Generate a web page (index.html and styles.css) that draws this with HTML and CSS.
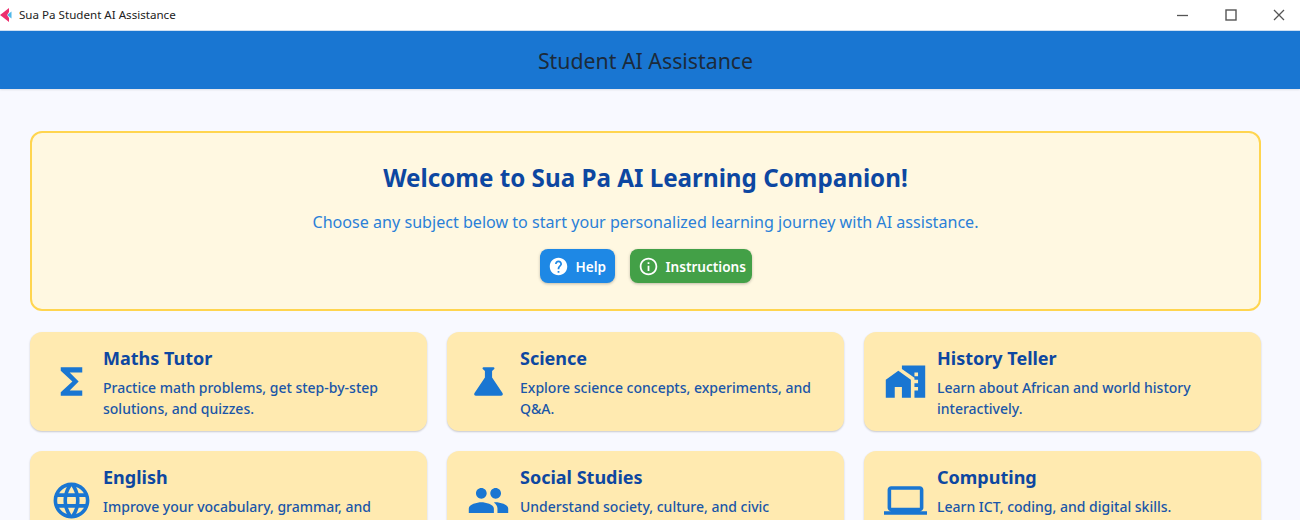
FILE: index.html
```html
<!DOCTYPE html>
<html>
<head>
	<title>Sua Pa Student AI Assistance</title>
	<link rel="stylesheet" href="styles.css">
</head>

<body>
	<div class="titlebar">
		<svg class="appicon" viewBox="0 0 12 14">
			<path d="M11.5 3.5 L7 7 L11.5 10.5 Z" fill="#4fb8ea"/>
			<path d="M9 0 L9 4 L7 7 L9 10 L9 14 L2 8.5 L0 7 L2 5.5 Z" fill="#ec2f6e"/>
		</svg>
		<span class="titlebar-text">Sua Pa Student AI Assistance</span>
		<div class="winbtns">
			<svg class="winbtn" viewBox="0 0 12 12"><path d="M0 6.5h11" stroke="#555" stroke-width="1.3"/></svg>
			<svg class="winbtn" viewBox="0 0 12 12"><rect x="1" y="1" width="10" height="10" fill="none" stroke="#555" stroke-width="1.4"/></svg>
			<svg class="winbtn" viewBox="0 0 12 12"><path d="M1 1l10 10M11 1L1 11" stroke="#555" stroke-width="1.3"/></svg>
		</div>
	</div>

	<div class="appbar">Student AI Assistance</div>

	<div class="content">
		<div class="welcome">
			<h1>Welcome to Sua Pa AI Learning Companion!</h1>
			<p>Choose any subject below to start your personalized learning journey with AI assistance.</p>
			<div class="btnrow">
				<div class="btn helpbtn">
					<svg viewBox="0 0 24 24"><path d="M12 2C6.48 2 2 6.48 2 12s4.48 10 10 10 10-4.48 10-10S17.52 2 12 2zm1 17h-2v-2h2v2zm2.07-7.75-.9.92C13.45 12.9 13 13.5 13 15h-2v-.5c0-1.1.45-2.1 1.17-2.83l1.24-1.26c.37-.36.59-.86.59-1.41 0-1.1-.9-2-2-2s-2 .9-2 2H8c0-2.21 1.79-4 4-4s4 1.79 4 4c0 .88-.36 1.68-.93 2.25z"/></svg>
					Help
				</div>
				<div class="btn infobtn">
					<svg viewBox="0 0 24 24"><path d="M11 7h2v2h-2zm0 4h2v6h-2zm1-9C6.48 2 2 6.48 2 12s4.48 10 10 10 10-4.48 10-10S17.52 2 12 2zm0 18c-4.41 0-8-3.59-8-8s3.59-8 8-8 8 3.59 8 8-3.59 8-8 8z"/></svg>
					Instructions
				</div>
			</div>
		</div>

		<div class="subjects">
			<div class="card">
				<svg class="cardicon" viewBox="0 0 24 24"><path d="M18 4H6v2l6.5 6L6 18v2h12v-3h-7l5-5-5-5h7z"/></svg>
				<div class="cardtext">
					<h2>Maths Tutor</h2>
					<p>Practice math problems, get step-by-step solutions, and quizzes.</p>
				</div>
			</div>
			<div class="card">
				<svg class="cardicon" viewBox="0 0 24 24"><path d="M19.8 18.4 14 9.8V6.2l1.2-1.2c.3-.4.1-1-.4-1H9.2c-.5 0-.7.6-.4 1L10 6.2v3.6L4.2 18.4c-.49.66-.02 1.6.8 1.6h14c.82 0 1.29-.94.8-1.6z"/></svg>
				<div class="cardtext">
					<h2>Science</h2>
					<p>Explore science concepts, experiments, and Q&amp;A.</p>
				</div>
			</div>
			<div class="card">
				<svg class="cardicon" viewBox="0 0 24 24"><path d="M1 11v10h5v-6h4v6h5V11L8 6z"/><path d="M10 3v1.97l7 5V11h2v2h-2v2h2v2h-2v4h6V3H10zm9 6h-2V7h2v2z"/></svg>
				<div class="cardtext">
					<h2>History Teller</h2>
					<p>Learn about African and world history interactively.</p>
				</div>
			</div>
			<div class="card">
				<svg class="cardicon" viewBox="0 0 24 24"><path d="M11.99 2C6.47 2 2 6.48 2 12s4.47 10 9.99 10C17.52 22 22 17.52 22 12S17.52 2 11.99 2zm6.93 6h-2.95c-.32-1.25-.78-2.45-1.38-3.56 1.84.63 3.37 1.91 4.33 3.56zM12 4.04c.83 1.2 1.48 2.53 1.91 3.96h-3.82c.43-1.43 1.08-2.76 1.91-3.96zM4.26 14C4.1 13.36 4 12.69 4 12s.1-1.36.26-2h3.38c-.08.66-.14 1.32-.14 2 0 .68.06 1.34.14 2H4.26zm.82 2h2.95c.32 1.25.78 2.45 1.38 3.56-1.84-.63-3.37-1.9-4.33-3.56zm2.95-8H5.08c.96-1.66 2.49-2.93 4.33-3.56C8.81 5.55 8.35 6.75 8.03 8zM12 19.96c-.83-1.2-1.48-2.53-1.91-3.96h3.82c-.43 1.43-1.08 2.76-1.91 3.96zM14.34 14H9.66c-.09-.66-.16-1.32-.16-2 0-.68.07-1.35.16-2h4.68c.09.65.16 1.32.16 2 0 .68-.07 1.34-.16 2zm.25 5.56c.6-1.11 1.06-2.31 1.38-3.56h2.95c-.96 1.65-2.49 2.93-4.33 3.56zM16.36 14c.08-.66.14-1.32.14-2 0-.68-.06-1.34-.14-2h3.38c.16.64.26 1.31.26 2s-.1 1.36-.26 2h-3.38z"/></svg>
				<div class="cardtext">
					<h2>English</h2>
					<p>Improve your vocabulary, grammar, and</p>
				</div>
			</div>
			<div class="card">
				<svg class="cardicon" viewBox="0 0 24 24"><path d="M16 11c1.66 0 2.99-1.34 2.99-3S17.66 5 16 5c-1.66 0-3 1.34-3 3s1.34 3 3 3zm-8 0c1.66 0 2.99-1.34 2.99-3S9.66 5 8 5C6.34 5 5 6.34 5 8s1.34 3 3 3zm0 2c-2.33 0-7 1.17-7 3.5V19h14v-2.5c0-2.33-4.67-3.5-7-3.5zm8 0c-.29 0-.62.02-.97.05 1.16.84 1.97 1.97 1.97 3.45V19h6v-2.5c0-2.33-4.67-3.5-7-3.5z"/></svg>
				<div class="cardtext">
					<h2>Social Studies</h2>
					<p>Understand society, culture, and civic</p>
				</div>
			</div>
			<div class="card">
				<svg class="cardicon" viewBox="0 0 24 24"><path d="M20 18c1.1 0 1.99-.9 1.99-2L22 6c0-1.1-.9-2-2-2H4c-1.1 0-2 .9-2 2v10c0 1.1.9 2 2 2H0v2h24v-2h-4zM4 6h16v10H4V6z"/></svg>
				<div class="cardtext">
					<h2>Computing</h2>
					<p>Learn ICT, coding, and digital skills.</p>
				</div>
			</div>
		</div>
	</div>
</body>
</html>
```

FILE: styles.css
```css
*{
	box-sizing:border-box;
	margin:0;
	padding:0;
}

html,body{
	height:520px;
	overflow:hidden;
}

body{
	background-color:#f8f9ff;
	font-family:"Noto Sans",sans-serif;
}

.titlebar{
	height:31px;
	background-color:#fff;
	border-bottom:1px solid #cfe0f3;
	display:flex;
	align-items:center;
	padding-right:15px;
	padding-bottom:1px;
}

.appicon{
	width:12px;
	height:14px;
	flex:none;
	margin-right:7px;
}

.titlebar-text{
	font-size:11.6px;
	color:#222;
	flex:1;
}

.winbtns{
	display:flex;
	gap:36px;
}

.winbtn{
	width:12px;
	height:12px;
}

.appbar{
	height:58px;
	background-color:#1976d2;
	color:#1c2a3a;
	font-size:21.3px;
	display:flex;
	align-items:center;
	justify-content:center;
	padding-right:9px;
	box-shadow:0 1px 2px rgba(0,0,0,0.1);
}

.content{
	padding:42px 39px 0 30px;
}

.welcome{
	height:180px;
	background-color:#fff8e1;
	border:2px solid #ffd54f;
	border-radius:12px;
	text-align:center;
	padding-top:28px;
}

.welcome h1{
	font-size:24.2px;
	line-height:34px;
	font-weight:700;
	color:#0d47a1;
}

.welcome p{
	font-size:16.1px;
	line-height:24px;
	color:#2a80d8;
	margin-top:15px;
}

.btnrow{
	display:flex;
	justify-content:center;
	gap:15px;
	margin-top:15px;
}

.btn{
	height:34px;
	border-radius:8px;
	color:#fff;
	font-size:13.6px;
	font-weight:600;
	display:flex;
	align-items:center;
	box-shadow:0 1px 3px rgba(0,0,0,0.25);
}

.btn svg{
	width:21px;
	height:21px;
	fill:#fff;
}

.helpbtn{
	width:75px;
	background-color:#1e88e5;
	padding-left:8px;
	gap:7px;
}

.infobtn{
	width:122px;
	background-color:#43a047;
	padding-left:8px;
	gap:7px;
}

.subjects{
	display:grid;
	grid-template-columns:repeat(3,397px);
	grid-auto-rows:99px;
	gap:20px;
	margin-top:21px;
}

.card{
	background-color:#ffeab0;
	border-radius:12px;
	box-shadow:0 1px 2px rgba(0,0,0,0.2);
	display:flex;
	align-items:center;
	padding:0 20px;
}

.cardicon{
	width:43px;
	height:43px;
	fill:#1976d2;
	flex:none;
}

.cardtext{
	margin-left:10px;
	align-self:flex-start;
	padding-top:12px;
}

.card h2{
	font-size:18px;
	line-height:28px;
	font-weight:700;
	color:#0d47a1;
}

.card p{
	font-size:14px;
	line-height:21px;
	font-weight:500;
	color:#1a56a8;
	margin-top:5px;
}
```
